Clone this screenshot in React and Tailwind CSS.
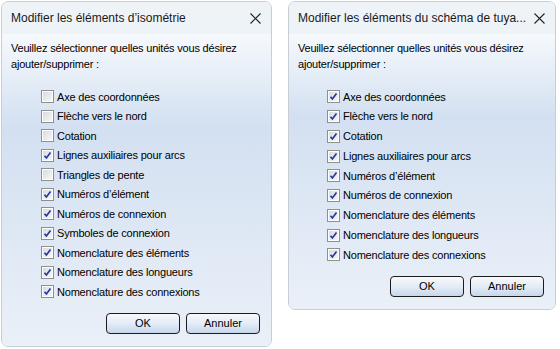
import React from 'react';

const isoItems = [
  { label: 'Axe des coordonnées', checked: false },
  { label: 'Flèche vers le nord', checked: false },
  { label: 'Cotation', checked: false },
  { label: 'Lignes auxiliaires pour arcs', checked: true },
  { label: 'Triangles de pente', checked: false },
  { label: 'Numéros d’élément', checked: true },
  { label: 'Numéros de connexion', checked: true },
  { label: 'Symboles de connexion', checked: true },
  { label: 'Nomenclature des éléments', checked: true },
  { label: 'Nomenclature des longueurs', checked: true },
  { label: 'Nomenclature des connexions', checked: true }
];

const schemaItems = [
  { label: 'Axe des coordonnées', checked: true },
  { label: 'Flèche vers le nord', checked: true },
  { label: 'Cotation', checked: true },
  { label: 'Lignes auxiliaires pour arcs', checked: true },
  { label: 'Numéros d’élément', checked: true },
  { label: 'Numéros de connexion', checked: true },
  { label: 'Nomenclature des éléments', checked: true },
  { label: 'Nomenclature des longueurs', checked: true },
  { label: 'Nomenclature des connexions', checked: true }
];

function CheckBox({ checked }) {
  return (
    <div className="w-[13px] h-[13px] border border-[#8e8f8f] bg-white p-[1px] shrink-0">
      <div className="w-full h-full bg-gradient-to-br from-[#d9dcdf] to-[#f6f6f6] flex items-center justify-center">
        {checked && (
          <svg width="9" height="9" viewBox="0 0 9 9">
            <path d="M1.5 4.8 L3.4 7 L7.5 1.5" fill="none" stroke="#2338a6" strokeWidth="1.7" />
          </svg>
        )}
      </div>
    </div>
  );
}

function Button({ children }) {
  return (
    <button className="w-[74px] h-[21px] rounded-[4px] border border-[#1c1c1c] bg-gradient-to-b from-[#f7f9fc] via-[#e4ecf6] to-[#c6d7ec] text-[11px] text-black leading-none">
      {children}
    </button>
  );
}

function Dialog({ title, items, width, rowClass, listPad }) {
  return (
    <div
      className={`${width} rounded-[7px] border border-[#c9ced4] overflow-hidden flex flex-col`}
    >
      <div className="h-[32px] bg-[#eef3f8] flex items-center justify-between pl-[9px] pr-[9px]">
        <span className="text-[12px] text-[#1a1a1a] whitespace-nowrap">{title}</span>
        <svg width="11" height="11" viewBox="0 0 11 11" className="mr-[1px]">
          <path d="M0.5 0.5 L10.5 10.5 M10.5 0.5 L0.5 10.5" stroke="#222" strokeWidth="1.1" />
        </svg>
      </div>
      <div className="bg-gradient-to-b from-[#f6f9fc] via-[#d3e0f1] via-[30%] to-[#eaf0f8] flex flex-col">
        <p className="px-[9px] pt-[6px] text-[11px] leading-[16px] tracking-[-0.2px] text-black">
          Veuillez sélectionner quelles unités vous désirez
          <br />
          ajouter/supprimer :
        </p>
        <div className={`flex flex-col mt-[15px] ${listPad}`}>
          {items.map((item) => (
            <div key={item.label} className={`${rowClass} flex items-center gap-[3px]`}>
              <CheckBox checked={item.checked} />
              <span className="text-[11px] tracking-[-0.2px] text-black whitespace-nowrap">{item.label}</span>
            </div>
          ))}
        </div>
        <div className="flex justify-end gap-[6px] pr-[11px] pt-[11px] pb-[12px]">
          <Button>OK</Button>
          <Button>Annuler</Button>
        </div>
      </div>
    </div>
  );
}

export default function App() {
  return (
    <div
      className="w-[560px] h-[349px] bg-white flex items-start gap-[16px] pl-[1px] pt-[1px]"
      style={{ fontFamily: '"Liberation Sans", Arial, sans-serif' }}
    >
      <Dialog
        title="Modifier les éléments d’isométrie"
        items={isoItems}
        width="w-[271px]"
        rowClass="h-[19.5px]"
        listPad="pl-[39px]"
      />
      <Dialog
        title="Modifier les éléments du schéma de tuya..."
        items={schemaItems}
        width="w-[268px]"
        rowClass="h-[19.75px]"
        listPad="pl-[38px]"
      />
    </div>
  );
}
